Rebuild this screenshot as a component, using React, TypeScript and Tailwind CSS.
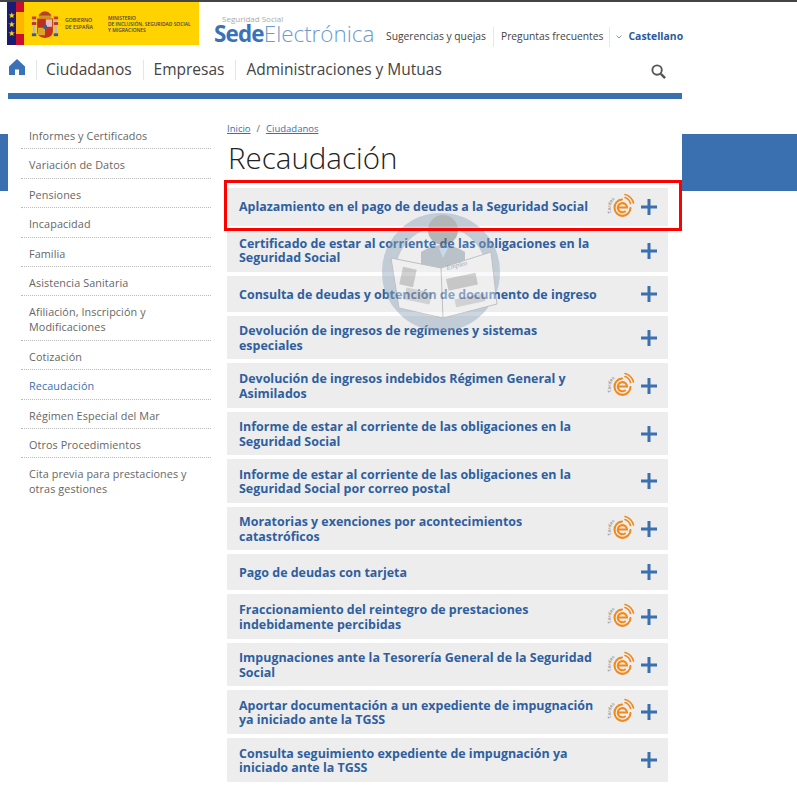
import React from "react";

const items = [
  { t: "Aplazamiento en el pago de deudas a la Seguridad Social", h: "h-[38px]", e: true },
  { t: "Certificado de estar al corriente de las obligaciones en la\nSeguridad Social", h: "h-[42px]" },
  { t: "Consulta de deudas y obtención de documento de ingreso", h: "h-[36px]" },
  { t: "Devolución de ingresos de regímenes y sistemas\nespeciales", h: "h-[43px]" },
  { t: "Devolución de ingresos indebidos Régimen General y\nAsimilados", h: "h-[45px]", e: true },
  { t: "Informe de estar al corriente de las obligaciones en la\nSeguridad Social", h: "h-[43px]" },
  { t: "Informe de estar al corriente de las obligaciones en la\nSeguridad Social por correo postal", h: "h-[44px]" },
  { t: "Moratorias y exenciones por acontecimientos\ncatastróficos", h: "h-[43px]", e: true },
  { t: "Pago de deudas con tarjeta", h: "h-[36px]" },
  { t: "Fraccionamiento del reintegro de prestaciones\nindebidamente percibidas", h: "h-[45px]", e: true },
  { t: "Impugnaciones ante la Tesorería General de la Seguridad\nSocial", h: "h-[43px]", e: true },
  { t: "Aportar documentación a un expediente de impugnación\nya iniciado ante la TGSS", h: "h-[44px]", e: true },
  { t: "Consulta seguimiento expediente de impugnación ya\niniciado ante la TGSS", h: "h-[44px]" },
];

const side = [
  "Informes y Certificados",
  "Variación de Datos",
  "Pensiones",
  "Incapacidad",
  "Familia",
  "Asistencia Sanitaria",
  "Afiliación, Inscripción y\nModificaciones",
  "Cotización",
  "Recaudación",
  "Régimen Especial del Mar",
  "Otros Procedimientos",
  "Cita previa para prestaciones y\notras gestiones",
];

function Arms() {
  return (
    <svg width="28" height="30" viewBox="0 0 32 32" preserveAspectRatio="none" className="shrink-0">
      <rect x="2" y="10" width="3" height="18" fill="#b9b9c4" />
      <rect x="27" y="10" width="3" height="18" fill="#b9b9c4" />
      <rect x="1" y="8" width="5" height="3" fill="#c8402a" />
      <rect x="26" y="8" width="5" height="3" fill="#c8402a" />
      <rect x="1" y="14" width="5" height="3" fill="#b8352a" />
      <rect x="26" y="14" width="5" height="3" fill="#b8352a" />
      <rect x="1" y="26" width="5" height="3" fill="#3e5a88" />
      <rect x="26" y="26" width="5" height="3" fill="#3e5a88" />
      <path d="M9 6 Q16 -1 23 6 L23 9 L9 9 Z" fill="#b8402a" />
      <rect x="9" y="7" width="14" height="2" fill="#c89a2a" />
      <path d="M7 10 H25 V24 Q25 30 16 31 Q7 30 7 24 Z" fill="#c4301f" />
      <rect x="17" y="11" width="7" height="8" fill="#e4b9c0" />
      <rect x="8" y="11" width="8" height="8" fill="#b8301f" />
      <rect x="8" y="20" width="8" height="8" fill="#d9a52a" />
      <circle cx="16" cy="19" r="2.4" fill="#2f5f9f" />
    </svg>
  );
}

function EIcon({ id }: { id: string }) {
  return (
    <svg width="28" height="28" viewBox="0 0 28 28" className="shrink-0 overflow-visible">
      <defs>
        <path id={id} d="M4.6 20 A12.5 12.5 0 0 1 14 3" fill="none" />
      </defs>
      <text fontSize="4.6" fill="#8a8a8a" fontFamily="Open Sans, sans-serif" fontWeight="600">
        <textPath href={`#${id}`}>Tardes</textPath>
      </text>
      <g fill="none" stroke="#f08a1d" strokeLinecap="round">
        <path d="M18 1.5 A12 12 0 0 1 26.5 10" strokeWidth="1.6" />
        <path d="M18 4.6 A9 9 0 0 1 23.5 10.5" strokeWidth="1.6" />
        <path d="M11 14.5 H20 A4.6 4.6 0 1 0 18 18.5" strokeWidth="2.1" />
        <path d="M23.5 15 A8 8.2 0 1 1 15 6.5" strokeWidth="2.1" />
      </g>
    </svg>
  );
}

function Plus() {
  return (
    <svg width="16" height="16" viewBox="0 0 16 16" className="shrink-0">
      <path d="M8 0.5 V15.5 M0.5 8 H15.5" stroke="#3a6fb0" strokeWidth="3" strokeLinecap="round" />
    </svg>
  );
}

function Watermark() {
  return (
    <svg width="120" height="120" viewBox="0 0 120 120" className="absolute left-[381px] top-[210px] opacity-45 pointer-events-none">
      <circle cx="60" cy="60" r="52" fill="none" stroke="#8fa5bb" strokeWidth="14" />
      <circle cx="60" cy="60" r="45" fill="#ffffff" fillOpacity="0.25" />
      <circle cx="62" cy="18" r="15" fill="#6f7478" />
      <path d="M40 40 Q62 26 84 40 L84 62 L40 62 Z" fill="#7b8d9e" />
      <path d="M58 36 L62 46 L67 36 Z" fill="#9cc3ea" />
      <path d="M10 46 L60 56 L110 40 L116 92 L62 106 L18 96 Z" fill="#f2f2f2" stroke="#8a8a8a" strokeWidth="1" />
      <path d="M60 56 L62 106" stroke="#8a8a8a" strokeWidth="1" />
      <rect x="20" y="56" width="14" height="18" fill="#9a9a9a" transform="rotate(12 27 65)" />
      <rect x="66" y="64" width="30" height="12" fill="#9a9a9a" transform="rotate(-12 80 70)" />
      <rect x="24" y="78" width="26" height="12" fill="#b0b0b0" transform="rotate(12 37 84)" />
      <rect x="74" y="84" width="30" height="8" fill="#b0b0b0" transform="rotate(-12 90 88)" />
      <text x="66" y="58" fontSize="7" fontStyle="italic" fill="#555" fontFamily="Liberation Serif, serif" transform="rotate(-14 66 58)">Empleo</text>
    </svg>
  );
}

export default function App() {
  return (
    <div className="relative w-[797px] h-[800px] bg-white overflow-hidden font-['Open_Sans',sans-serif] border-t-[2px] border-[#444]">
      {/* top header */}
      <header className="flex items-start h-[44px] pl-[7px]">
        <div className="flex items-center w-[192px] h-[43px] bg-[#ffd200]">
          <div className="flex flex-col w-[9px] h-full bg-[#1b1b6f] items-center justify-center text-[#ffd200] text-[8px] leading-[9px]">
            <span className="h-[9px]">★</span>
            <span className="h-[9px]">★</span>
            <span className="h-[9px]">★</span>
          </div>
          <div className="flex flex-col w-[8px] h-full">
            <div className="h-[10px] bg-[#c8102e]" />
            <div className="flex-1 bg-[#ffb400]" />
            <div className="h-[11px] bg-[#c8102e]" />
          </div>
          <div className="ml-[7px]"><Arms /></div>
          <div className="ml-[6px] w-[43px] text-[5.2px] leading-[6.5px] text-[#444] font-semibold">GOBIERNO<br />DE ESPAÑA</div>
          <div className="text-[4.9px] leading-[6px] text-[#444] font-semibold whitespace-nowrap">MINISTERIO<br />DE INCLUSIÓN, SEGURIDAD SOCIAL<br />Y MIGRACIONES</div>
        </div>
        <div className="ml-[15px] w-[157px] pt-[12px]">
          <div className="pl-[8px] text-[8px] leading-[9px] text-[#aaa]">Seguridad Social</div>
          <div className="text-[22.4px] leading-[22px] whitespace-nowrap text-[#3a72b8]">
            <span className="font-bold tracking-[-0.8px]">Sede</span><span className="font-light text-[#6b9ccf]">Electrónica</span>
          </div>
        </div>
        <div className="flex items-center h-[22px] ml-[15px] mt-[24px] text-[10.3px] text-[#444]">
          <span>Sugerencias y quejas</span>
          <span className="w-px h-[20px] bg-[#e8e8e8] ml-[7px] mr-[7px]" />
          <span>Preguntas frecuentes</span>
          <span className="w-px h-[20px] bg-[#e8e8e8] ml-[6px] mr-[6px]" />
          <svg width="6" height="4" viewBox="0 0 6 4" className="mr-[6px]"><path d="M0.5 0.5 L3 3 L5.5 0.5" fill="none" stroke="#7a9cc6" strokeWidth="1" /></svg>
          <span className="font-bold text-[10.4px] text-[#2a5a9f]">Castellano</span>
        </div>
      </header>

      {/* nav */}
      <nav className="relative flex items-center h-[47px] w-[682px] pl-[9px] text-[15.5px] text-[#444]">
        <svg width="16" height="16" viewBox="0 0 16 16" className="mb-[5px]"><path d="M8 0 L16 7.5 V16 H10 V10.5 H6 V16 H0 V7.5 Z" fill="#3a72b8" /></svg>
        <span className="w-px h-[20px] bg-[#e5e5e5] ml-[11px] mr-[9px]" />
        <span>Ciudadanos</span>
        <span className="w-px h-[20px] bg-[#e5e5e5] ml-[11px] mr-[10px]" />
        <span>Empresas</span>
        <span className="w-px h-[20px] bg-[#e5e5e5] ml-[11px] mr-[10px]" />
        <span>Administraciones y Mutuas</span>
        <svg width="15" height="15" viewBox="0 0 16 16" className="ml-auto mr-[16px] mt-[4px]"><circle cx="6.5" cy="6.5" r="5" fill="none" stroke="#555" strokeWidth="2" /><path d="M10.5 10.5 L15 15" stroke="#555" strokeWidth="2.6" /></svg>
      </nav>

      <div className="w-[682px] ml-0 pl-[8px]"><div className="h-[6px] bg-[#3a6fb0]" /></div>

      {/* main row */}
      <div className="flex">
        <div className="w-[8px] h-[57px] mt-[35px] bg-[#3a6fb0]" />
        <div className="flex w-[674px] bg-white">
          <aside className="w-[190px] ml-[13px] pt-[21px] text-[10.8px] leading-[15px] tracking-[0.1px] text-[#666]">
            {side.map((s, i) => (
              <div
                key={s}
                className={`pl-[8px] pt-[8px] pb-[5.4px] whitespace-pre-line ${i < side.length - 1 ? "border-b border-dotted border-[#bbb]" : ""} ${s === "Recaudación" ? "text-[#3a6fb0]" : ""}`}
              >
                {s}
              </div>
            ))}
          </aside>
          <main className="w-[441px] ml-[16px]">
            <div className="pt-[23px] text-[9.5px] leading-[13px] text-[#3a6fb0]">
              <span className="underline">Inicio</span>
              <span className="text-[#666] mx-[6px]">/</span>
              <span className="underline">Ciudadanos</span>
            </div>
            <h1 className="pl-[1px] mt-[3px] text-[29.5px] leading-[40px] font-light text-[#222]">Recaudación</h1>
            <div className="flex flex-col gap-[4px] mt-[10px]">
              {items.map((it, i) => (
                <div key={it.t} className={`flex items-center bg-[#ededed] pl-[12px] pr-[11px] ${it.h}`}>
                  <span className={`flex-1 whitespace-pre-line text-[12.45px] leading-[14.5px] font-bold text-[#2f5f9f] ${i >= 2 ? "pt-[2px]" : ""}`}>{it.t}</span>
                  {it.e && <EIcon id={`curve-${i}`} />}
                  <span className="ml-[6px]"><Plus /></span>
                </div>
              ))}
            </div>
          </main>
        </div>
        <div className="w-[115px] h-[57px] mt-[35px] bg-[#3a6fb0]" />
      </div>

      <Watermark />
      <div className="absolute left-[224px] top-[178px] w-[458px] h-[51px] border-[3px] border-[#f00] pointer-events-none" />
    </div>
  );
}
